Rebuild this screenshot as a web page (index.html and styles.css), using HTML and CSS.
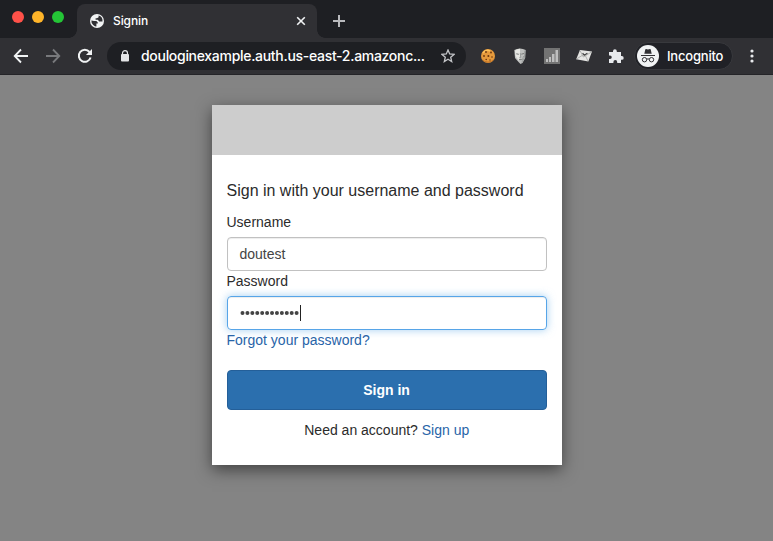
FILE: index.html
```html
<!DOCTYPE html>
<html lang="en">
<head>
<meta charset="utf-8">
<title>Signin</title>
<link rel="stylesheet" href="styles.css">
</head>
<body>
<header class="browser">
  <div class="tabstrip">
    <div class="lights"><i class="red"></i><i class="yellow"></i><i class="green"></i></div>
    <div class="tab">
      <svg class="globe" width="14" height="14" viewBox="0 0 14 14"><circle cx="7" cy="7" r="7" fill="#f1f3f4"/><path d="M8.6 1.6V3.2L7 4.2H5.6V5.8H7.8L9.2 7.4H12.5A5.6 5.6 0 0 0 8.6 1.6M1.4 6.4 4 7H6.4L7.8 8.4V9.6H6.4V12.5H8A5.6 5.6 0 0 1 1.4 6.4" fill="#303034"/></svg>
      <span class="tab-title">Signin</span>
      <svg class="close" width="10" height="10" viewBox="0 0 10 10"><path d="M1.2 1.2 8.8 8.8M8.8 1.2 1.2 8.8" stroke="#f1f3f4" stroke-width="1.6"/></svg>
    </div>
    <svg class="plus" width="12" height="12" viewBox="0 0 12 12"><path d="M6 0V12M0 6H12" stroke="#b9babd" stroke-width="2"/></svg>
  </div>
  <div class="toolbar">
    <svg class="nav back" width="16" height="16" viewBox="0 0 16 16"><path d="M15 8H2M8 1.5 1.7 8 8 14.5" fill="none" stroke="#f1f3f4" stroke-width="1.8"/></svg>
    <svg class="nav forward" width="16" height="16" viewBox="0 0 16 16"><path d="M1 8H14M8 1.5 14.3 8 8 14.5" fill="none" stroke="#78797c" stroke-width="1.8"/></svg>
    <svg class="nav reload" width="16" height="16" viewBox="0 0 16 16"><path d="M13.6 9.5A6 6 0 1 1 12.5 4" fill="none" stroke="#f1f3f4" stroke-width="2"/><path d="M15 .9V7H8.9Z" fill="#f1f3f4"/></svg>
    <div class="address">
      <svg class="lock" width="10" height="12" viewBox="0 0 10 12"><path d="M2.5 5V3.2a2.5 2.5 0 0 1 5 0V5" fill="none" stroke="#e4e5e7" stroke-width="1.2"/><rect x="1" y="4" width="8" height="7.5" rx="1" fill="#e4e5e7"/></svg>
      <span class="url">douloginexample.auth.us-east-2.amazonc...</span>
      <svg class="star" width="14" height="14" viewBox="0 0 14 14"><path d="M7 1 8.7 5 13 5.4 9.7 8.2 10.7 12.6 7 10.3 3.3 12.6 4.3 8.2 1 5.4 5.3 5Z" fill="none" stroke="#c3c4c7" stroke-width="1.3"/></svg>
    </div>
    <div class="extensions">
      <svg width="16" height="16" viewBox="0 0 16 16"><circle cx="8" cy="8" r="7" fill="#e69a3c"/><path d="M2 11a7 7 0 0 0 12 0 8 8 0 0 1-12 0" fill="#b9671f"/><path d="M3 5Q6 1 10 3" fill="none" stroke="#ffc35b" stroke-width="1.5"/><g fill="#6b360f"><circle cx="6" cy="4" r=".9"/><circle cx="11" cy="4.5" r=".9"/><circle cx="4" cy="8" r=".9"/><circle cx="8.4" cy="8" r="1"/><circle cx="12" cy="9" r=".8"/><circle cx="6.2" cy="11.5" r=".8"/><circle cx="10" cy="12" r=".7"/></g></svg>
      <svg width="16" height="16" viewBox="0 0 16 16"><path d="M2.3 2Q8-1 13.7 2L13.2 10 10.5 15 8.5 16 6.5 14 3 10Z" fill="#bfc0bf"/><path d="M8 .8Q4 1 3 3L3.5 8 7 13 8 9Z" fill="#e6e6e3"/><path d="M4.3 5.8 6.8 6.3M9.3 6.2 12 5.5M7 11.6H9.8" fill="none" stroke="#777978" stroke-width="1"/><path d="M8.3 5 8.8 9.4H7.4M11.6 8 10.4 12M12.8 2.5 12.5 9.7 9.7 14.4" fill="none" stroke="#949796" stroke-width=".9"/></svg>
      <svg width="16" height="16" viewBox="0 0 16 16"><path d="M0 0H16V16H0Z" fill="#737373"/><path d="M2 11H4V14H2ZM5 9H7V14H5ZM8 6H10.5V14H8ZM11.5 2H14V14H11.5Z" fill="#bebebe"/></svg>
      <svg width="16" height="16" viewBox="0 0 16 16"><path d="M4 2 16 3.6 12.3 13.5.2 11.3Z" fill="#e5e5e3"/><path d="M4 2.5 7.3 9 15.5 4M.5 11 6 7.5M12 13 9.5 8" fill="none" stroke="#a0a1a0" stroke-width=".8"/><path d="m6.6 5.2 1.6 2 3.2-2" fill="none" stroke="#444" stroke-width="1.2"/></svg>
      <svg width="16" height="16" viewBox="0 0 16 16"><path d="M1 4H5V3.2a1.9 1.9 0 0 1 3.8 0V4H13V8H13.8a1.9 1.9 0 0 1 0 3.8H13V15H9.2V14a1.9 1.9 0 0 0-3.8 0V15H1V11H2a1.7 1.7 0 0 0 0-3.5H1Z" fill="#e8eaed"/></svg>
    </div>
    <div class="profile">
      <svg width="22" height="22" viewBox="0 0 22 22"><circle cx="11" cy="11" r="11" fill="#f1f3f4"/><path d="m7.3 8.7 1-4.2q.2-.6.8-.4l1.9.5 1.9-.5q.6-.2.8.4l1 4.2Z" fill="#303034"/><path d="M4 10.5H18" stroke="#303034" stroke-width="1"/><g fill="none" stroke="#303034" stroke-width="1"><circle cx="7.5" cy="14.7" r="2.2"/><circle cx="14.5" cy="14.7" r="2.2"/><path d="M9.7 14.2q1.3-.7 2.6 0"/></g></svg>
      <span>Incognito</span>
    </div>
    <svg class="menu" width="4" height="14" viewBox="0 0 4 14" fill="#e8eaed"><circle cx="2" cy="2" r="1.6"/><circle cx="2" cy="7" r="1.6"/><circle cx="2" cy="12" r="1.6"/></svg>
  </div>
</header>
<main>
  <section class="modal">
    <div class="banner"></div>
    <form>
      <h1>Sign in with your username and password</h1>
      <label for="username">Username</label>
      <div class="field" id="username">doutest</div>
      <label for="password">Password</label>
      <div class="field focused" id="password"><svg width="60" height="6" viewBox="0 0 60 6"><path d="M2.5 3H57" fill="none" stroke="#444" stroke-width="4" stroke-linecap="round" stroke-dasharray="0 4.92"/></svg><span class="caret"></span></div>
      <a class="forgot">Forgot your password?</a>
      <button type="button">Sign in</button>
      <p>Need an account? <a>Sign up</a></p>
    </form>
  </section>
</main>
</body>
</html>
```
FILE: styles.css
```css
* { box-sizing: border-box; }
body { margin: 0; height: 541px; overflow: hidden; background: #848484; font: 14px/20px "Liberation Sans", Arial, sans-serif; color: #2b2b2b; }
svg { display: block; flex: none; }
.browser { height: 75px; color: #fff; font-family: Inter, Roboto, sans-serif; }
.tabstrip { height: 38px; display: flex; background: #1e1f23; }
.lights { display: flex; gap: 8px; width: 77px; height: 38px; padding: 11px 0 0 12px; background: #1e1f23; }
.lights i { width: 12px; height: 12px; border-radius: 50%; }
.red { background: #ff5149; }
.yellow { background: #ffb429; }
.green { background: #24c536; }
.tab { position: relative; width: 240px; height: 34px; margin-top: 4px; padding: 0 11px 0 13px; border-radius: 8px 8px 0 0; background: #303034; display: flex; align-items: center; }
.tab::before, .tab::after { content: ""; position: absolute; bottom: 0; width: 8px; height: 8px; }
.tab::before { left: -8px; background: radial-gradient(circle at 0 0, transparent 7.5px, #303034 8px); }
.tab::after { right: -8px; background: radial-gradient(circle at 100% 0, transparent 7.5px, #303034 8px); }
.tab-title { margin-left: 9px; font-size: 12px; font-weight: 500; letter-spacing: -.1px; flex: 1; }
.plus { margin: 15px 0 0 16px; }
.toolbar { height: 37px; padding-bottom: 1px; display: flex; align-items: center; background: #303034; border-bottom: 1px solid #242428; }
.back { margin-left: 13px; }
.forward { margin-left: 16px; }
.reload { margin-left: 16px; }
.address { width: 359px; height: 28px; margin-left: 14px; padding: 0 11px 0 13px; border-radius: 14px; background: #1e1f23; display: flex; align-items: center; }
.url { flex: 1; margin-left: 11px; white-space: nowrap; font-size: 14px; font-weight: 500; letter-spacing: -.3px; }
.extensions { display: flex; gap: 16px; margin-left: 14px; }
.profile { width: 99px; height: 28px; margin-left: 10px; padding-left: 2px; display: flex; align-items: center; gap: 8px; border: 1px solid #38393d; border-radius: 14px; background: #202126; font-size: 13px; font-weight: 500; letter-spacing: -.2px; }
.menu { margin-left: 17px; }
main { padding-top: 30px; }
.modal { width: 350px; height: 360px; margin-left: 212px; background: #fff; box-shadow: 0 5px 15px rgba(0,0,0,.5); }
.banner { height: 50px; background: #cdcdcd; }
form { padding: 25px 15px 0; }
h1 { height: 20px; margin: 0 0 12px; font-size: 16px; line-height: 22px; font-weight: 400; white-space: nowrap; }
h1, label, .forgot, p { text-indent: -.5px; }
label { display: block; height: 25px; line-height: 20px; }
.field { height: 34px; padding: 0 11.5px; display: flex; align-items: center; border: 1px solid #c1c1c1; border-radius: 4px; box-shadow: inset 0 1px 1px rgba(0,0,0,.075); color: #444; }
.focused { border-color: #57a5e8; box-shadow: inset 0 1px 1px rgba(0,0,0,.075), 0 0 8px rgba(102,175,233,.6); }
.caret { width: 1px; height: 16px; background: #222; }
a { color: #2864a8; }
.forgot { display: block; height: 40px; }
button { display: block; width: 100%; height: 40px; padding: 0 1px 0 0; border: 1px solid #245f99; border-radius: 4px; background: #2b6fae; color: #fff; font: bold 14px "Liberation Sans", Arial, sans-serif; }
p { margin: 10px 0 0; text-align: center; }
```
